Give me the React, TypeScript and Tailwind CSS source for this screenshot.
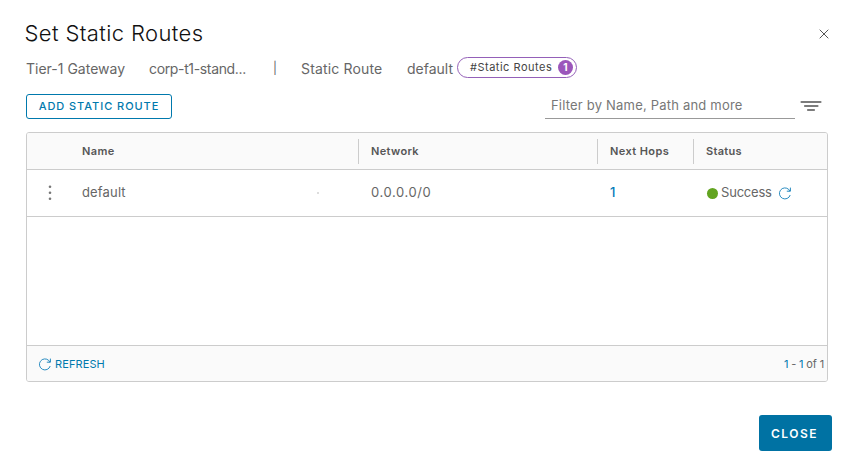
import React from "react";

function RefreshIcon() {
  return (
    <svg width="14" height="14" viewBox="0 0 14 14" fill="none" stroke="#2a8cc0" strokeWidth="1" className="shrink-0">
      <path d="M12.2 9A5.5 5.5 0 1 1 10.8 3.5L12.1 4.8" />
      <path d="M12.4 1.6V5.2H8.8" />
      <path d="M10.4 5.2 12.4 3.2V5.2Z" fill="#2a8cc0" stroke="none" />
    </svg>
  );
}

function HeaderCell({ label, className }: { label: string; className: string }) {
  return (
    <div className={`flex h-[25px] shrink-0 items-center border-l pl-3 text-[11px] font-semibold text-[#565656] ${className}`}>
      {label}
    </div>
  );
}

export default function App() {
  return (
    <div className="flex h-[473px] w-[854px] flex-col overflow-hidden bg-white pt-[19px] pl-[26px] font-['Inter','Liberation_Sans',sans-serif] whitespace-nowrap text-[#666]">
      <header className="flex h-[30px] w-[804px] items-center justify-between">
        <h1 className="mb-[2px] -ml-[1.5px] text-[22px] leading-[30px] font-light tracking-[0.38px] text-[#111]">Set Static Routes</h1>
        <svg width="10" height="10" viewBox="0 0 10 10" stroke="#555" strokeWidth="1" className="mr-px">
          <path d="M.7.7 9.3 9.3M9.3.7.7 9.3" />
        </svg>
      </header>

      <div className="mt-2 flex h-[22px] items-center text-[14px] leading-[22px]">
        <span className="w-[123px] pt-[2px] tracking-[0px]">Tier-1 Gateway</span>
        <span className="w-[124px] pt-[2px] tracking-[-0.35px]">corp-t1-stand...</span>
        <span className="w-[28px] text-[12px]">|</span>
        <span className="w-[106px] pt-[2px] tracking-[0.15px]">Static Route</span>
        <span className="w-[50px] pt-[2px]">default</span>
        <span className="mb-[2px] flex h-[21px] w-[120px] items-center justify-between rounded-full border border-[#9460b8] pr-[3px] pl-3 text-[11px] text-[#444]">
          <span className="tracking-[0.5px]">#Static Routes</span>
          <span className="flex h-[15px] w-[15px] items-center justify-center rounded-full bg-[#9b56bb] text-[10px] font-bold text-white">1</span>
        </span>
      </div>

      <div className="mt-[14px] flex h-[26px] w-[802px] items-center">
        <button className="h-[25px] w-[146px] rounded-[3px] border border-[#0079ad] text-[11px] font-medium tracking-[0.95px] text-[#0079ad]">
          ADD STATIC ROUTE
        </button>
        <div className="mb-px ml-[373px] h-[26px] w-[250px] border-b border-[#999] pl-[6px] text-[13px] leading-[25px] tracking-[0.2px] text-[#777]">
          Filter by Name, Path and more
        </div>
        <svg width="22" height="12" viewBox="0 0 22 12" className="ml-[5px] text-[#7c7c7c]" fill="currentColor">
          <rect x="0.5" y="1" width="21" height="2" rx=".8" />
          <rect x="4" y="5" width="14.5" height="2" rx=".8" />
          <rect x="7" y="9" width="8" height="2" rx=".8" />
        </svg>
      </div>

      <section className="mt-[13px] flex h-[250px] w-[802px] flex-col overflow-hidden rounded-[3px] border border-[#ccc]">
        <div className="flex h-[37px] shrink-0 items-center border-b border-[#ccc] bg-[#fafafa]">
          <HeaderCell label="Name" className="ml-[42px] w-[289px] border-transparent tracking-[0.4px]" />
          <HeaderCell label="Network" className="w-[239px] border-[#ccc] tracking-[0.35px]" />
          <HeaderCell label="Next Hops" className="w-[96px] border-[#ccc] tracking-[0.4px]" />
          <HeaderCell label="Status" className="w-[132px] border-[#ccc] tracking-[0.3px]" />
        </div>
        <div className="flex h-[47px] shrink-0 items-center border-b border-[#ccc] text-[13px]">
          <svg width="4" height="16" viewBox="0 0 4 16" className="ml-[21px] shrink-0" fill="#777">
            <circle cx="2" cy="1.8" r="1.3" />
            <circle cx="2" cy="7.8" r="1.3" />
            <circle cx="2" cy="13.8" r="1.3" />
          </svg>
          <span className="ml-[30px] w-[235px] tracking-[0.15px]">default</span>
          <span className="h-[2px] w-[2px] bg-[#ddd]" />
          <span className="ml-[52px] w-[239px] tracking-[0.6px]">0.0.0.0/0</span>
          <span className="w-[97px] font-medium text-[#0079b8]">1</span>
          <span className="h-[11px] w-[11px] shrink-0 rounded-full bg-[#62a420]" />
          <span className="ml-[3px] w-[57px] tracking-[-0.2px]">Success</span>
          <RefreshIcon />
        </div>
        <div className="flex-1" />
        <footer className="flex h-[36px] shrink-0 items-center justify-between border-t border-[#ccc] bg-[#fafafa] pt-px pr-[3px] pl-[11px] text-[11px]">
          <div className="flex items-center gap-[3px] text-[#0079ad]">
            <RefreshIcon />
            <span className="tracking-[0.1px]">REFRESH</span>
          </div>
          <span className="tracking-[-0.15px]"><span className="text-[#0079ad]">1</span> - <span className="text-[#0079ad]">1</span> of <span>1</span></span>
        </footer>
      </section>

      <button className="mt-[33px] ml-[733px] h-[36px] w-[73px] shrink-0 rounded-[3px] bg-[#0072a3] pt-px pr-[2px] text-[12px] font-semibold tracking-[1.45px] text-white">
        CLOSE
      </button>
    </div>
  );
}
